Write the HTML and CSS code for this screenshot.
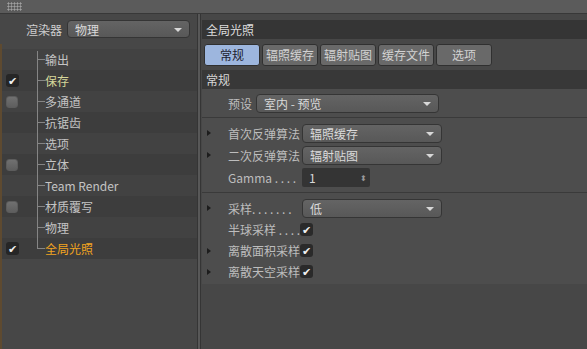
FILE: index.html
```html
<!DOCTYPE html>
<html lang="zh-CN">
<head>
    <meta charset="UTF-8">
    <title>渲染设置</title>
    <link rel="stylesheet" href="styles.css">
</head>
<body>
    <div class="topbar">
        <span class="grip"></span>
    </div>
    <div class="main">
        <aside class="sidebar">
            <div class="renderer">
                <span class="renderer-label">渲染器</span>
                <div class="select select-side">物理<span class="caret"></span></div>
            </div>
            <ul class="tree">
                <li class="row"><span class="check"></span><span class="item">输出</span></li>
                <li class="row"><span class="check"><span class="tick">✔</span></span><span class="item saved">保存</span></li>
                <li class="row"><span class="check"><span class="box"></span></span><span class="item">多通道</span></li>
                <li class="row"><span class="check"></span><span class="item">抗锯齿</span></li>
                <li class="row"><span class="check"></span><span class="item">选项</span></li>
                <li class="row"><span class="check"><span class="box"></span></span><span class="item">立体</span></li>
                <li class="row"><span class="check"></span><span class="item">Team Render</span></li>
                <li class="row"><span class="check"><span class="box"></span></span><span class="item">材质覆写</span></li>
                <li class="row"><span class="check"></span><span class="item">物理</span></li>
                <li class="row last"><span class="check"><span class="tick">✔</span></span><span class="item active">全局光照</span></li>
            </ul>
        </aside>
        <div class="divider"></div>
        <section class="panel">
            <div class="panel-title">全局光照</div>
            <div class="tabs">
                <span class="tab current">常规</span>
                <span class="tab">辐照缓存</span>
                <span class="tab">辐射贴图</span>
                <span class="tab">缓存文件</span>
                <span class="tab">选项</span>
            </div>
            <div class="group-title">常规</div>
            <div class="group">
                <div class="prop preset">
                    <span class="prop-label">预设</span>
                    <div class="select select-wide">室内 - 预览<span class="caret"></span></div>
                </div>
                <div class="sep"></div>
                <div class="prop">
                    <span class="arrow"></span>
                    <span class="prop-label">首次反弹算法</span>
                    <div class="select">辐照缓存<span class="caret"></span></div>
                </div>
                <div class="prop">
                    <span class="arrow"></span>
                    <span class="prop-label">二次反弹算法</span>
                    <div class="select">辐射贴图<span class="caret"></span></div>
                </div>
                <div class="prop">
                    <span class="arrow hidden"></span>
                    <span class="prop-label">Gamma . . . .</span>
                    <div class="spin">1<span class="spin-btn">⬍</span></div>
                </div>
                <div class="sep"></div>
                <div class="prop">
                    <span class="arrow"></span>
                    <span class="prop-label">采样. . . . . . .</span>
                    <div class="select">低<span class="caret"></span></div>
                </div>
                <div class="prop small">
                    <span class="arrow hidden"></span>
                    <span class="prop-label">半球采样 . . . .</span>
                    <span class="cb">✔</span>
                </div>
                <div class="prop small">
                    <span class="arrow"></span>
                    <span class="prop-label">离散面积采样</span>
                    <span class="cb">✔</span>
                </div>
                <div class="prop small">
                    <span class="arrow"></span>
                    <span class="prop-label">离散天空采样</span>
                    <span class="cb">✔</span>
                </div>
            </div>
        </section>
    </div>
</body>
</html>
```

FILE: styles.css
```css
* {
    box-sizing: border-box;
}
html, body {
    margin: 0;
    padding: 0;
}
body {
    width: 587px;
    height: 349px;
    overflow: hidden;
    background-color: #474747;
    color: #c8c8c8;
    font-family: "Noto Sans CJK SC", "Noto Sans", sans-serif;
    font-size: 12px;
}
.topbar {
    height: 14px;
    background-color: #5b5b5b;
    border-bottom: 1px solid #383838;
    padding: 2px 0 0 7px;
}
.grip {
    display: block;
    width: 15px;
    height: 9px;
    background-image: radial-gradient(circle, #a0a0a0 0.9px, transparent 1.2px);
    background-size: 3px 3px;
}
.main {
    display: flex;
    height: 335px;
}

/* left side */
.sidebar {
    width: 197px;
    padding-left: 2px;
    background: linear-gradient(#5e4a30, #5e4a30) 0 30px / 2px 100% no-repeat, #474747;
}
.renderer {
    display: flex;
    align-items: center;
    height: 18px;
    margin: 6px 0 11px;
}
.renderer-label {
    width: 65px;
    text-align: right;
    padding-right: 5px;
    color: #cfcfcf;
}
.select {
    position: relative;
    display: flex;
    align-items: center;
    width: 140px;
    height: 19px;
    padding-left: 7px;
    border: 1px solid #353535;
    border-radius: 4px;
    background: linear-gradient(#646464, #585858);
    color: #dadada;
    font-size: 12px;
}
.select-side {
    width: 123px;
    height: 18px;
}
.select-wide {
    width: 183px;
}
.caret {
    position: absolute;
    right: 7px;
    top: 7px;
    border-left: 4px solid transparent;
    border-right: 4px solid transparent;
    border-top: 4px solid #d8d8d8;
}
.tree {
    list-style: none;
    margin: 0;
    padding: 0;
}
.row {
    position: relative;
    display: flex;
    align-items: center;
    height: 21px;
}
.row:nth-child(odd) {
    background-color: #424242;
}
.row:nth-child(even) {
    background-color: #3d3d3d;
}
.row::before {
    content: "";
    position: absolute;
    left: 35px;
    top: 0;
    bottom: 0;
    border-left: 1px solid #858585;
}
.row:first-child::before {
    top: 2px;
}
.row.last::before {
    bottom: 10px;
}
.row::after {
    content: "";
    position: absolute;
    left: 35px;
    top: 10px;
    width: 8px;
    border-top: 1px solid #858585;
}
.check {
    width: 43px;
    padding-left: 4px;
    display: flex;
    align-items: center;
}
.tick {
    display: flex;
    align-items: center;
    justify-content: center;
    width: 13px;
    height: 13px;
    border-radius: 3px;
    background-color: #262626;
    color: #f0f0f0;
    font-size: 11px;
    line-height: 1;
}
.box {
    display: block;
    width: 12px;
    height: 12px;
    border-radius: 3px;
    border: 1px solid #5c5c5c;
    background: linear-gradient(#707070, #5e5e5e);
}
.item {
    color: #c4c4c4;
}
.item.saved {
    color: #d6d89a;
}
.item.active {
    color: #f2a420;
}

.divider {
    width: 4px;
    border-left: 1px solid #353535;
    border-right: 1px solid #353535;
    background-color: #585858;
}

/* right side */
.panel {
    flex: 1;
    padding-left: 1px;
}
.panel-title {
    height: 19px;
    margin-top: 6px;
    padding-left: 4px;
    background-color: #353535;
    color: #dcdcdc;
    font-size: 12px;
    line-height: 19px;
}
.tabs {
    display: flex;
    gap: 2px;
    height: 22px;
    margin-top: 5px;
    padding-left: 2px;
}
.tab {
    width: 56px;
    border: 1px solid #303030;
    border-radius: 3px;
    background-color: #696969;
    color: #d2d2d2;
    text-align: center;
    line-height: 20px;
    font-size: 12px;
}
.tab.current {
    background-color: #9db6de;
    color: #1e2230;
}
.group-title {
    height: 19px;
    margin-top: 4px;
    padding-left: 4px;
    background-color: #383838;
    color: #d6d6d6;
    line-height: 19px;
}
.group {
    background-color: #4d4d4d;
    padding: 5px 0 2px;
}
.prop {
    display: flex;
    align-items: center;
    height: 22px;
}
.prop.small {
    height: 21px;
}
.prop.preset {
    height: 19px;
    padding-left: 26px;
}
.preset .prop-label {
    width: 28px;
    padding-right: 4px;
    text-align: right;
}
.arrow {
    width: 26px;
    padding-left: 5px;
}
.arrow::before {
    content: "";
    display: block;
    width: 0;
    height: 0;
    border-top: 3.5px solid transparent;
    border-bottom: 3.5px solid transparent;
    border-left: 4px solid #1c1c1c;
}
.arrow.hidden::before {
    visibility: hidden;
}
.prop-label {
    width: 74px;
    color: #bdbdbd;
    white-space: nowrap;
}
.sep {
    height: 1px;
    margin: 4px 0;
    background-color: #3a3a3a;
}
.spin {
    position: relative;
    width: 68px;
    height: 19px;
    padding-left: 7px;
    border-radius: 2px;
    background-color: #343434;
    color: #d8d8d8;
    line-height: 19px;
}
.spin-btn {
    position: absolute;
    right: 3px;
    top: 0;
    font-size: 8px;
    color: #999;
}
.cb {
    display: flex;
    align-items: center;
    justify-content: center;
    width: 13px;
    height: 13px;
    margin-left: -2px;
    border-radius: 3px;
    background-color: #2a2a2a;
    color: #f0f0f0;
    font-size: 11px;
    line-height: 1;
}
```
